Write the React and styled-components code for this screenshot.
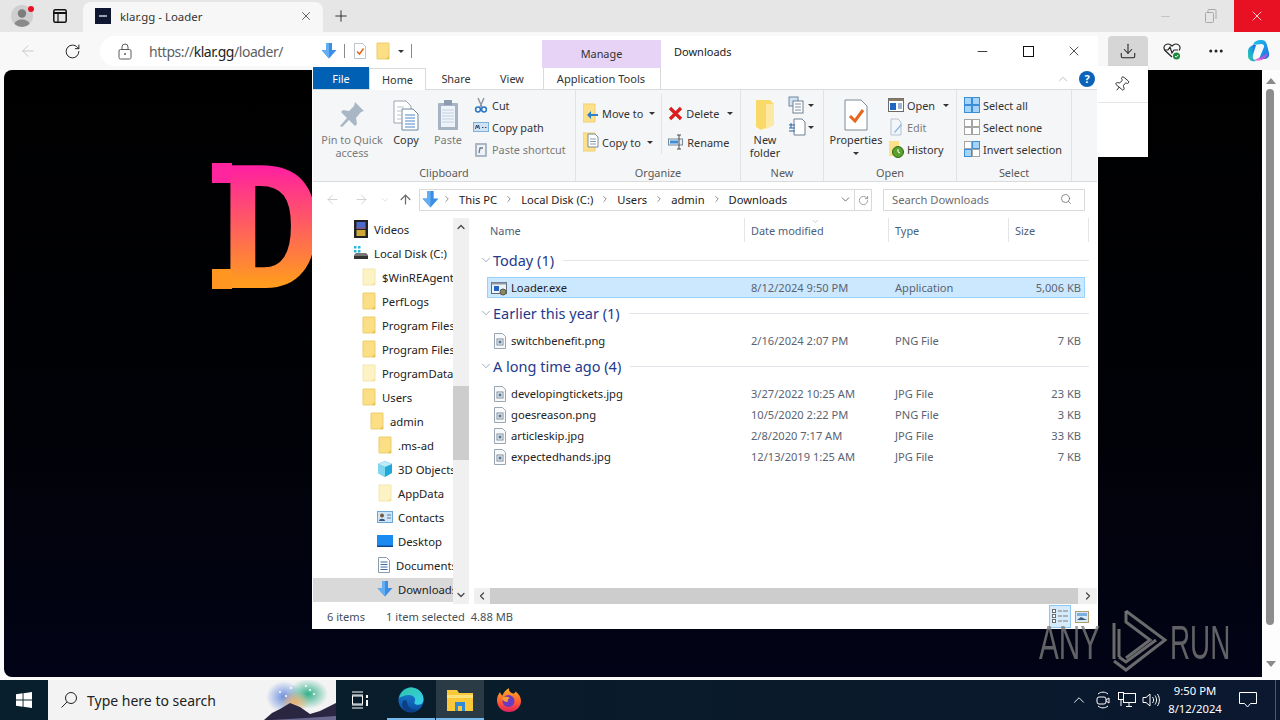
import React from 'react';
import styled, { createGlobalStyle } from 'styled-components';
import { ArrowLeft, RotateCw, Download, Ellipsis, Pin, X, Plus, Minus, Search, ChevronUp, ChevronDown, ChevronRight, ChevronLeft, ArrowUp, ArrowRight } from 'lucide-react';

const UI = '"Noto Sans", "Open Sans", sans-serif';

const Global = createGlobalStyle`
  html, body { margin: 0; padding: 0; width: 1280px; height: 720px; overflow: hidden; background: #fff; }
  * { box-sizing: border-box; }
  svg { display: block; flex: none; }
`;

const Screen = styled.div`position: relative; width: 1280px; height: 720px; display: flex; flex-direction: column; overflow: hidden; font-family: ${UI}; color: #333;`;
const Browser = styled.div`height: 680px; display: flex; flex-direction: column; background: #fbfbfb;`;
const TabStrip = styled.div`height: 32px; display: flex; align-items: stretch; background: #e6e6e6;`;
const StripBtn = styled.div`width: ${p => p.$w}px; display: flex; align-items: center; justify-content: center; position: relative; color: ${p => p.$c || '#222'}; background: ${p => p.$bg || 'transparent'};`;
const Spring = styled.div`flex: 1;`;
const Tab = styled.div`width: 240px; margin: 2px 0 0 7px; background: #f7f7f7; border-radius: 8px 8px 0 0; display: flex; align-items: center; padding: 0 10px 2px 12px;`;
const Favicon = styled.div`width: 16px; height: 16px; background: #0f1630; display: flex; align-items: center; justify-content: center; margin-right: 9px; &::after { content: ''; width: 8px; height: 2px; background: #98a0b0; }`;
const TabTitle = styled.div`flex: 1; font-size: 11.4px; color: #333;`;
const Dot = styled.span`position: absolute; width: 6px; height: 6px; border-radius: 50%; background: #e81123; top: 6px; left: 28px;`;

const Toolbar = styled.div`height: 38px; display: flex; align-items: flex-start; padding-top: 4px; background: #f8f8f8;`;
const NavBtn = styled.div`width: ${p => p.$w}px; height: 30px; display: flex; align-items: center; justify-content: center; color: ${p => p.$c || '#222'};`;
const UrlPill = styled.div`width: 500px; height: 30px; margin-left: 0; border-radius: 15px; background: #fff; display: flex; align-items: center; padding-left: 18px; font-size: 14px; color: #5f5f5f;`;
const UrlText = styled.span`margin-left: 17px; letter-spacing: -.45px; b { font-weight: 400; color: #222; }`;
const ActiveBtn = styled.div`width: 40px; height: 30px; background: #d6d6d6; border-radius: 4px 4px 0 0; display: flex; align-items: center; justify-content: center; color: #222; margin-left: 508px;`;

const Viewport = styled.div`flex: 1; display: flex; min-height: 0;`;
const PageCanvas = styled.div`flex: 1; margin: 0 0 3px 4px; border-radius: 8px 0 0 8px; overflow: hidden; background: linear-gradient(180deg, #000 0%, #010207 60%, #020316 100%); padding: 84px 0 0 215px;`;
const Hero = styled.div`
  position: relative; width: 120px; height: 170px;
  &::before, &::after { content: ''; position: absolute; left: -7px; width: 20px; height: 20px; }
  &::before { top: 9px; background: #ff259e; }
  &::after { top: 115px; background: #ff9621; }
`;
const HeroLetter = styled.div`font-family: "Liberation Mono", monospace; font-weight: 700; font-size: 186px; line-height: 170px; width: 120px; transform: scaleX(.93); transform-origin: left center; background: linear-gradient(180deg, #ff219f 8%, #ff9b1f 76%); -webkit-background-clip: text; background-clip: text; color: transparent;`;
const PageScroll = styled.div`width: 18px; display: flex; flex-direction: column; align-items: center; background: #fdfdfd; padding: 8px 0 12px; color: #8a8a8a;`;
const PageThumb = styled.div`width: 8px; height: 536px; margin: 5px 2px 36px 0; border-radius: 4px; background: #8c8c8c;`;
const Tri = styled.span`width: 0; height: 0; border-left: 5px solid transparent; border-right: 5px solid transparent; ${p => p.$down ? 'border-top: 6px solid #8a8a8a;' : 'border-bottom: 6px solid #8a8a8a;'}`;

const Flyout = styled.div`position: absolute; left: 1098px; top: 66px; width: 50px; height: 91px; background: #fff; box-shadow: 0 1px 2px rgba(0,0,0,.2);`;
const FlyoutHead = styled.div`height: 37px; border-bottom: 1px solid #e6e6e6; display: flex; align-items: center; justify-content: center; padding: 0 4px 0 0; color: #222;`;

const Win = styled.div`position: absolute; left: 312px; top: 36px; width: 786px; height: 593px; background: #fff; display: flex; flex-direction: column; padding: 0 1px; font-size: 10.9px; color: #333;`;
const TitleRow = styled.div`height: 32px; display: flex; align-items: flex-start;`;
const Quick = styled.div`width: 229px; height: 30px; display: flex; align-items: center; padding-left: 8px;`;
const ManageTab = styled.div`width: 119px; height: 28px; margin-top: 4px; background: #e6d3f5; display: flex; align-items: center; justify-content: center; color: #333; padding-bottom: 1px;`;
const WinTitle = styled.div`margin: 8px 0 0 13px; flex: 1; font-size: 11px; color: #222;`;
const WinBtn = styled.div`width: 46px; height: 30px; display: flex; align-items: center; justify-content: center; color: #111;`;
const MaxBox = styled.span`width: 11px; height: 11px; border: 1.5px solid #111;`;
const VSep = styled.span`width: 1px; height: 14px; background: #8a8a8a; margin: 0 ${p => p.$m || 0}px;`;
const Gap = styled.span`width: ${p => p.$w}px;`;

const TabRow = styled.div`height: 22px; display: flex; align-items: stretch; border-bottom: 1px solid #dadbdc;`;
const FileTab = styled.div`width: 56px; height: 22px; margin-top: -1px; background: #0060b4; color: #fff; display: flex; align-items: center; justify-content: center;`;
const RTab = styled.div`width: ${p => p.$w}px; height: ${p => p.$on ? 22 : 21}px; display: flex; align-items: center; justify-content: center; background: #fff; position: relative; z-index: 1; ${p => p.$on && 'border: 1px solid #dadbdc; border-bottom: none;'}`;
const ToolTab = styled(RTab)`border-left: 1px solid #dadbdc; border-right: 1px solid #dadbdc; margin-left: 5px; padding-right: 2px; font-size: 11.1px;`;
const RowEnd = styled.div`flex: 1; display: flex; justify-content: flex-end; align-items: center; gap: 9px; padding-right: 2px;`;
const Help = styled.span`width: 16px; height: 16px; border-radius: 50%; background: #0a63b8; color: #fff; font-weight: 700; font-size: 11px; display: flex; align-items: center; justify-content: center;`;

const Ribbon = styled.div`height: 92px; display: flex; background: #f5f6f7; border-bottom: 1px solid #dadbdc;`;
const Group = styled.div`width: ${p => p.$w}px; display: flex; flex-direction: column; border-right: 1px solid #e2e3e4;`;
const GroupBody = styled.div`height: 75px; display: flex; padding-left: ${p => p.$pl || 0}px;`;
const GroupLabel = styled.div`flex: 1; text-align: center; color: #5a5a5a; line-height: 16px;`;
const Large = styled.div`width: ${p => p.$w}px; padding-top: 9px; display: flex; flex-direction: column; align-items: center; text-align: center; line-height: 13px; color: ${p => p.$off ? '#7a7a7a' : '#333'};`;
const LargeLabel = styled.div`margin-top: 2px;`;
const Stack = styled.div`display: flex; flex-direction: column; margin-left: ${p => p.$ml || 0}px; padding-top: ${p => p.$pt ?? 4}px; gap: ${p => p.$gap || 0}px;`;
const Small = styled.div`height: 22px; display: flex; align-items: center; gap: 3px; white-space: nowrap; color: ${p => p.$off ? '#7a7a7a' : '#333'};`;
const MiniTri = styled.span`width: 0; height: 0; margin: ${p => p.$m || '0 0 0 3px'}; border-left: 3px solid transparent; border-right: 3px solid transparent; border-top: 3px solid #333;`;
const InnerSep = styled.div`width: 1px; height: 60px; background: #e2e3e4; margin: 4px 6px 0 6px;`;

const AddressRow = styled.div`height: 36px; padding-top: 7px; display: flex; align-items: flex-start; font-size: 11.2px;`;
const ANav = styled.div`width: ${p => p.$w}px; height: 21px; display: flex; align-items: center; justify-content: center; color: ${p => p.$c || '#cfcfcf'};`;
const AddressBox = styled.div`width: 436px; height: 22px; margin-left: 4px; border: 1px solid #d9d9d9; display: flex; align-items: center; padding: 0 0 2px 2px; color: #1b1b1b;`;
const Crumb = styled.span`margin: 0 7px; white-space: nowrap;`;
const Refresh = styled.div`width: 17px; height: 22px; border: 1px solid #d9d9d9; border-left: none; display: flex; align-items: center; justify-content: center; color: #777;`;
const SearchBox = styled.div`width: 202px; height: 22px; margin-left: 11px; border: 1px solid #d9d9d9; display: flex; align-items: center; justify-content: space-between; padding: 0 12px 2px 8px; color: #6d6d6d;`;

const Body = styled.div`flex: 1; display: flex; min-height: 0;`;
const Tree = styled.div`width: 140px; overflow: hidden; background: #fff; font-size: 11.3px;`;
const TreeRow = styled.div`height: 24px; display: flex; align-items: center; gap: 5px; padding: 0 0 2px ${p => p.$i}px; white-space: nowrap; color: #222; background: ${p => p.$on ? '#d9d9d9' : 'transparent'};`;
const VBar = styled.div`width: 16px; background: #f0f0f0; display: flex; flex-direction: column; align-items: center; color: #444;`;
const VArrow = styled.div`height: 18px; display: flex; align-items: center; justify-content: center;`;
const VThumb = styled.div`width: 16px; height: 74px; background: #cdcdcd; margin-top: 150px; margin-bottom: auto;`;

const ListPane = styled.div`flex: 1; display: flex; flex-direction: column; min-width: 0; margin-left: 1px;`;
const ColHead = styled.div`height: 24px; display: flex; color: #4c607a;`;
const ColCell = styled.div`width: ${p => p.$w}px; padding-left: ${p => p.$pl || 6}px; display: flex; align-items: center; border-right: 1px solid #e5e5e5; position: relative;`;
const SortCaret = styled.span`position: absolute; left: 66px; top: -1px; color: #9a9a9a;`;
const Items = styled.div`flex: 1; padding: 3px 12px 0 0;`;
const GroupHead = styled.div`height: 32px; display: flex; align-items: center; padding: 0 0 2px 9px; font-size: 14.5px; color: #243a8c; margin-right: -4px;`;
const GroupChevron = styled.span`width: 14px; color: #7a8ba0;`;
const GroupName = styled.span`white-space: nowrap;`;
const GroupLine = styled.span`flex: 1; height: 1px; background: #e2e5ea; margin-left: 9px;`;
const ItemRow = styled.div`height: 21px; margin-left: 17px; padding: 0 3px 0 5px; display: grid; grid-template-columns: 258px 144px 1fr auto; align-items: center; font-size: 11.1px; color: #5a6472; border: 1px solid ${p => p.$on ? '#99d1ff' : 'transparent'}; background: ${p => p.$on ? '#cce8ff' : 'transparent'};`;
const ItemName = styled.div`display: flex; align-items: center; gap: 4px; color: #222; font-size: 11.2px;`;
const ItemIcon = styled.span`width: 14px; display: flex; justify-content: flex-end;`;
const HBar = styled.div`height: 16px; margin-left: 4px; display: flex; background: #f0f0f0; color: #444;`;
const HArrow = styled.div`width: ${p => p.$w}px; display: flex; align-items: center; justify-content: center;`;
const HThumb = styled.div`flex: 1; background: #cdcdcd;`;
const Status = styled.div`height: 25px; display: flex; align-items: center; padding-left: 14px; color: #444f5c; font-size: 11.1px;`;
const StatusText = styled.span`margin-right: ${p => p.$mr || 0}px;`;
const ViewBtn = styled.div`width: ${p => p.$w}px; height: 23px; display: flex; align-items: center; justify-content: center; ${p => p.$on && 'background: #d5ebfb; border: 1px solid #8cc8f0;'}`;
const ViewBtns = styled.div`margin-left: auto; display: flex; margin-right: 8px; gap: 3px;`;

const Taskbar = styled.div`height: 40px; display: flex; align-items: stretch; background: linear-gradient(90deg, #07202c, #0a1a2a 60%, #0b1830); color: #fff;`;
const TaskBtn = styled.div`width: ${p => p.$w || 48}px; margin-left: ${p => p.$ml || 0}px; display: flex; align-items: center; justify-content: center; position: relative; background: ${p => p.$on ? '#2a3b45' : 'transparent'}; ${p => p.$bar && 'border-bottom: 2px solid #76b9ed; padding-top: 2px;'}`;
const SearchBar = styled.div`width: 288px; background: #f3f3f3; display: flex; align-items: center; padding-left: 12px; color: #222; font-size: 14px; overflow: hidden; position: relative;`;
const SearchLabel = styled.span`margin-left: 9px; white-space: nowrap;`;
const SearchArt = styled.div`margin-left: auto; align-self: flex-end;`;
const Tray = styled.div`width: 24px; display: flex; align-items: center; justify-content: center;`;
const Clock = styled.div`width: 64px; margin-right: 2px; text-align: center; font-size: 11.3px; line-height: 18px; padding-top: 2px; white-space: nowrap;`;
const Peek = styled.div`width: 5px; border-left: 1px solid #4b5b66; margin-left: 9px;`;

const Mark = styled.div`position: absolute; left: 1039px; top: 609px; display: flex; align-items: center; height: 63px; color: rgba(125,125,125,.78); pointer-events: none;`;
const MarkWord = styled.span`font-family: "Liberation Sans", sans-serif; font-size: 48px; line-height: 48px; width: ${p => p.$w}px; display: block; transform: scaleX(${p => p.$sx}); transform-origin: left center; white-space: nowrap; margin-top: 4px;`;

/* ---- drawn icons ---- */
const Folder = ({ pale }) => (
  <svg width="16" height="18" viewBox="0 0 16 18"><path d="M2 1h12v16H2z" fill={pale ? '#fdf2c4' : '#fcdf85'} stroke={pale ? '#f3e6b0' : '#eccd6e'} /><path d="M11 17l3-3v3z" fill={pale ? '#f3e2a0' : '#e8bf45'} /></svg>
);
const FileDoc = () => (
  <svg width="14" height="16" viewBox="0 0 14 16"><path d="M1.5.5h8l3 3v12h-11z" fill="#f7f9fb" stroke="#9aa6b2" /><rect x="4" y="6" width="6" height="6" fill="#fff" stroke="#7b8b9a" /><rect x="5.5" y="7.5" width="3" height="3" fill="#5a7a9a" /></svg>
);
const ExeIcon = () => (
  <svg width="16" height="16" viewBox="0 0 16 16"><rect x=".5" y="2.5" width="15" height="11" fill="#eef2f6" stroke="#5d6a76" /><rect x=".5" y="2.5" width="15" height="2" fill="#8d99a6" /><rect x="3" y="6" width="5" height="5" fill="#1f66c4" /><circle cx="12" cy="12" r="3" fill="#8b8a5a" stroke="#555" /></svg>
);
const Videos = () => (<svg width="16" height="18" viewBox="0 0 16 18"><rect x="1" y="0" width="14" height="18" fill="#222" /><rect x="3.5" y="2" width="9" height="6" fill="#4a6ad0" /><rect x="3.5" y="10" width="9" height="6" fill="#d0a83a" /><rect x="3.5" y="7" width="9" height="2" fill="#7a5a90" /></svg>);
const Disk = () => (<svg width="16" height="16" viewBox="0 0 16 16"><rect x="1" y="1" width="2.5" height="2.5" fill="#28b8e0" /><rect x="5" y="1" width="2.5" height="2.5" fill="#28b8e0" /><rect x="1" y="5" width="2.5" height="2.5" fill="#28b8e0" /><rect x="5" y="5" width="2.5" height="2.5" fill="#28b8e0" /><path d="M1 10l2-2h10l2 2v4H1z" fill="#777" /><rect x="1" y="11" width="14" height="3" fill="#333" /></svg>);
const Cube = () => (<svg width="16" height="16" viewBox="0 0 16 16"><path d="M8 0l7 3v9l-7 4-7-4V3z" fill="#1fa8d8" /><path d="M8 0l7 3-7 3-7-3z" fill="#bdeaf8" /><path d="M1 3l7 3v10l-7-4z" fill="#7fd6ee" /></svg>);
const Contacts = () => (<svg width="16" height="14" viewBox="0 0 16 14"><rect x=".5" y="1.5" width="15" height="11" fill="#cfe6f8" stroke="#6aa6d8" /><circle cx="5" cy="5.5" r="2" fill="#7a5a3a" /><path d="M2 11c0-3 6-3 6 0z" fill="#3a5a7a" /><path d="M10 5h4M10 8h4" stroke="#5a7a9a" /></svg>);
const DesktopIco = () => (<svg width="16" height="14" viewBox="0 0 16 14"><rect x="0" y="1" width="16" height="12" fill="#1a8cf0" /><rect x="0" y="11.5" width="16" height="1.5" fill="#0a4a90" /></svg>);
const DocsIco = () => (<svg width="14" height="16" viewBox="0 0 14 16"><path d="M1.5.5h8l3 3v12h-11z" fill="#fff" stroke="#8a9aaa" /><path d="M3.5 5h7M3.5 7.5h7M3.5 10h7M3.5 12.5h7" stroke="#3a6aa0" /></svg>);
const DownArrow = ({ s = 16 }) => (<svg width={s} height={s} viewBox="0 0 16 16"><path d="M5 0h6v7h4.5L8 15.5.5 7H5z" fill="#3a8ee6" /><path d="M5 0h3v15.5L.5 7H5z" fill="#63aef0" /></svg>);

const PinIco = () => (<svg width="32" height="32" viewBox="0 0 32 32"><path d="M19 3l9 9-3 1-5 6 1 6-2 2-6-6-7 7-2-1 7-8-6-6 2-2 6 1 5-5z" fill="#a9b6c6" /></svg>);
const CopyIco = () => (<svg width="32" height="32" viewBox="0 0 32 32"><path d="M4 2h12l5 5v17H4z" fill="#fff" stroke="#9aa6b2" /><path d="M12 10h11l5 5v16H12z" fill="#fff" stroke="#6f87a0" /><path d="M15 16h10M15 19h10M15 22h10M15 25h10M15 28h10" stroke="#4f86c6" /><path d="M7 8h7M7 12h4M7 16h4M7 20h4" stroke="#b9c2cc" /></svg>);
const PasteIco = () => (<svg width="32" height="32" viewBox="0 0 32 32"><rect x="6" y="4" width="20" height="27" rx="1" fill="#a5b3c4" /><rect x="9" y="7" width="14" height="21" fill="#eef3fa" /><path d="M10 11h12M10 14h12M10 17h12M10 20h12M10 23h12" stroke="#c5d2e2" /><rect x="12" y="1" width="8" height="5" fill="#8d9cb0" /></svg>);
const CutIco = () => (<svg width="16" height="16" viewBox="0 0 16 16"><path d="M5 1l4 9M11 1L7 10" stroke="#8a939e" strokeWidth="1.4" /><circle cx="5" cy="12.5" r="2.4" fill="none" stroke="#2a75c4" strokeWidth="1.5" /><circle cx="11" cy="12.5" r="2.4" fill="none" stroke="#2a75c4" strokeWidth="1.5" /></svg>);
const CopyPathIco = () => (<svg width="16" height="16" viewBox="0 0 16 16"><rect x=".5" y="3.5" width="15" height="9" fill="#cfe3f5" stroke="#7fb0da" /><path d="M2.5 10l1-4 1 3 1-3 1 4M9 8.5h1.5M12 8.5h1.5" stroke="#2a4a6a" fill="none" /></svg>);
const ShortcutIco = () => (<svg width="16" height="16" viewBox="0 0 16 16"><rect x="2" y="2" width="12" height="14" rx="1" fill="#aab6c4" /><rect x="4" y="4" width="8" height="10" fill="#eef2f7" /><path d="M6 12l1-5h3" stroke="#6a7a8a" fill="none" strokeWidth="1.3" /></svg>);
const MoveIco = () => (<svg width="16" height="20" viewBox="0 0 16 20"><path d="M0 1h12v18H0z" fill="#fde08a" stroke="#f1cf70" /><path d="M15 11H8V8l-4 4 4 4v-3h7z" fill="#2f7fd0" /></svg>);
const CopyToIco = () => (<svg width="16" height="20" viewBox="0 0 16 20"><path d="M0 1h12v18H0z" fill="#fde08a" stroke="#f1cf70" /><path d="M5 2h7l3 3v10H5z" fill="#fff" stroke="#7a8a9a" /><path d="M7 7h6M7 9.500h6M7 12h6" stroke="#8a9aaa" /></svg>);
const DeleteIco = () => (<svg width="15" height="15" viewBox="0 0 15 15"><path d="M2 2l11 11M13 2L2 13" stroke="#d81e1e" strokeWidth="3.2" /></svg>);
const RenameIco = () => (<svg width="16" height="16" viewBox="0 0 16 16"><rect x=".5" y="5" width="14" height="6" fill="#e6eef6" stroke="#7a8a9a" /><rect x="2" y="6.5" width="8" height="3" fill="#3d8edb" /><path d="M11 1v14M9 1h4M9 15h4" stroke="#4a4a4a" /></svg>);
const NewFolderIco = () => (<svg width="32" height="32" viewBox="0 0 32 32"><path d="M7 1h14l4 4v21l-13 5-5-3z" fill="#fbd968" /><path d="M17 5l8 0v21l-8 4z" fill="#fce9a4" /></svg>);
const NewItemIco = () => (<svg width="20" height="18" viewBox="0 0 20 18"><rect x="1" y="1" width="9" height="9" fill="#cfe3f5" stroke="#6f87a0" /><rect x="5" y="5" width="10" height="12" fill="#fff" stroke="#6f7f8f" /><path d="M7 8h6M7 11h6M7 14h6" stroke="#7a8a9a" /></svg>);
const EasyIco = () => (<svg width="20" height="18" viewBox="0 0 20 18"><path d="M6 1h8l3 3v13H6z" fill="#fff" stroke="#6f7f8f" /><path d="M1 7h6M1 10h6M1 13h6M3 5v5" stroke="#2a64a8" /></svg>);
const PropsIco = ({ s = 32 }) => (<svg width={s} height={s} viewBox="0 0 32 32"><path d="M5 1h16l6 6v24H5z" fill="#fff" stroke="#7a8a9a" /><path d="M10 17l5 5 8-11" stroke="#e8651c" strokeWidth="3" fill="none" /></svg>);
const OpenIco = () => (<svg width="16" height="14" viewBox="0 0 16 14"><rect x=".5" y=".5" width="15" height="13" fill="#fff" stroke="#6a6a6a" /><rect x=".5" y=".5" width="15" height="2.5" fill="#8a7a6a" /><rect x="2" y="5" width="6" height="7" fill="#1f66c4" /><path d="M10 6h4M10 8h4M10 10h4" stroke="#3a6aa0" /></svg>);
const EditIco = () => (<svg width="16" height="18" viewBox="0 0 16 18"><path d="M3 1h7l3 3v13H3z" fill="#f2f6fb" stroke="#b5c2d0" /><path d="M6 14l7-8 1 1-7 8z" fill="#8fb7df" /></svg>);
const HistoryIco = () => (<svg width="16" height="18" viewBox="0 0 16 18"><rect x="1" y="1" width="10" height="15" fill="#fde08a" /><circle cx="10" cy="12" r="5.5" fill="#5aa02c" stroke="#2f6a18" /><path d="M10 9v3l2 1" stroke="#fff" fill="none" /></svg>);
const SelIco = ({ a, b, c, d }) => {
  const cell = on => on ? { fill: '#a6d4f6', stroke: '#3a8fd8' } : { fill: '#fff', stroke: '#a5a5a5' };
  return (<svg width="16" height="16" viewBox="0 0 16 16"><rect x=".5" y=".5" width="7" height="7" {...cell(a)} /><rect x="8.5" y=".5" width="7" height="7" {...cell(b)} /><rect x=".5" y="8.5" width="7" height="7" {...cell(c)} /><rect x="8.5" y="8.5" width="7" height="7" {...cell(d)} /></svg>);
};
const Avatar = () => (<svg width="22" height="22" viewBox="0 0 22 22"><circle cx="11" cy="11" r="11" fill="#cfcfcf" /><circle cx="11" cy="8.5" r="4.2" fill="#7d7d7d" /><path d="M3.5 19c1-6 14-6 15 0a11 11 0 0 1-15 0z" fill="#8a8a8a" /></svg>);
const Panes = () => (<svg width="14" height="14" viewBox="0 0 14 14"><rect x=".8" y=".8" width="12.4" height="12.4" rx="1.5" fill="none" stroke="#111" strokeWidth="1.5" /><path d="M.8 4h12.4" stroke="#111" strokeWidth="2" /><path d="M5 4v9" stroke="#111" strokeWidth="1.2" /></svg>);
const Restore = () => (<svg width="12" height="14" viewBox="0 0 12 14"><rect x=".5" y="3.5" width="8" height="10" rx="1" fill="none" stroke="#a8a8a8" /><path d="M3 3V1.5a1 1 0 0 1 1-1h6a1 1 0 0 1 1 1V10" fill="none" stroke="#a8a8a8" /></svg>);
const LockIco = () => (<svg width="14" height="17" viewBox="0 0 14 17"><rect x="1" y="6.5" width="12" height="9.5" rx="1.5" fill="none" stroke="#5a5a5a" /><path d="M4 6.5V4a3 3 0 0 1 6 0v2.5" fill="none" stroke="#5a5a5a" /><circle cx="7" cy="11" r="1" fill="#5a5a5a" /></svg>);
const HealthIco = () => (<svg width="20" height="20" viewBox="0 0 20 20"><path d="M10 16L3 9.5C-.5 5 5.5.5 10 5c4.500-4.500 10.500 0 7 4.500" fill="none" stroke="#222" strokeWidth="1.2" /><path d="M2 9h4l2-3 2 6 2-3h4" fill="none" stroke="#222" strokeWidth="1.2" /><circle cx="14.500" cy="15" r="3.500" fill="#1c8a3c" /><path d="M13 15l1.200 1.200 2-2.200" stroke="#fff" fill="none" /></svg>);
const Copilot = () => (<svg width="24" height="24" viewBox="0 0 24 24"><defs><linearGradient id="cpa" x1="0" y1="0" x2="1" y2="1"><stop offset="0" stopColor="#1dc8f0" /><stop offset="1" stopColor="#1a6ee0" /></linearGradient><linearGradient id="cpb" x1="0" y1="1" x2="1" y2="0"><stop offset="0" stopColor="#2fd2a0" /><stop offset=".6" stopColor="#1a9ee0" /><stop offset="1" stopColor="#2060e0" /></linearGradient></defs><path d="M7 6c1-4 5-5 8-5 3 0 5 1 6 5l2 8c1 4-2 6-5 6h-5l5-12c.5-2-1-3-3-3z" fill="url(#cpa)" /><path d="M2 12c0-3 3-5 5-6l3 0-3 10c-1 3 1 5 3 6-4 1-8-1-8-5z" fill="url(#cpb)" /><path d="M8 21c3 1 7 1 10-1 2-1 3-3 4-6l-5 3z" fill="#d94fd0" opacity=".75" /></svg>);
const DetailsIco = () => (<svg width="17" height="15" viewBox="0 0 17 15"><g fill="#fff" stroke="#6a6a6a"><rect x=".5" y=".5" width="3" height="3" /><rect x=".5" y="5.500" width="3" height="3" /><rect x=".5" y="10.500" width="3" height="3" /></g><path d="M6 2h4M11 2h5M6 7h4M11 7h5M6 12h4M11 12h5" stroke="#7a7a7a" /></svg>);
const ThumbIco = () => (<svg width="14" height="12" viewBox="0 0 14 12"><rect x=".5" y=".5" width="13" height="11" fill="#d9e8f5" stroke="#b09a70" /><path d="M2 9l4-3 6 3z" fill="#3a5a7a" /><rect x="2" y="2" width="10" height="3" fill="#7ab0e0" /></svg>);
const WinLogo = () => (<svg width="16" height="16" viewBox="0 0 16 16"><path d="M0 2.300L6.600 1.300v6.200H0zM7.500 1.200L16 0v7.500H7.500zM0 8.500h6.600v6.200L0 13.700zM7.500 8.500H16V16l-8.500-1.200z" fill="#fff" /></svg>);
const Magnifier = () => (<svg width="18" height="18" viewBox="0 0 18 18"><circle cx="11" cy="7" r="5.500" fill="none" stroke="#222" /><path d="M7 11l-5.500 5.500" stroke="#222" /></svg>);
const SearchPic = () => (<svg width="72" height="40" viewBox="0 0 72 40"><defs><radialGradient id="sk1"><stop offset="0" stopColor="#6a8fe0" /><stop offset="1" stopColor="#6a8fe0" stopOpacity="0" /></radialGradient><radialGradient id="sk2"><stop offset="0" stopColor="#34b08a" /><stop offset="1" stopColor="#34b08a" stopOpacity="0" /></radialGradient><radialGradient id="sk3"><stop offset="0" stopColor="#e8b070" /><stop offset="1" stopColor="#e8b070" stopOpacity="0" /></radialGradient></defs><ellipse cx="20" cy="17" rx="18" ry="16" fill="url(#sk1)" /><ellipse cx="44" cy="14" rx="20" ry="15" fill="url(#sk2)" /><ellipse cx="31" cy="22" rx="15" ry="11" fill="url(#sk3)" /><path d="M0 40l8-7 8-4 10-6 10 4 10 7 10-3 16-8v17z" fill="#2a2540" /><path d="M6 40h66v-4l-30 2z" fill="#6a6a90" /><g fill="#fff"><circle cx="16" cy="12" r="1" /><circle cx="27" cy="8" r="1" /><circle cx="42" cy="6" r="1" /><circle cx="50" cy="14" r="1" /><circle cx="22" cy="16" r="1" /><circle cx="46" cy="10" r="1" /></g></svg>);
const TaskView = () => (<svg width="18" height="18" viewBox="0 0 18 18"><path d="M1 1h11M1 17h11M1 14h11M1 4h11" stroke="#fff" /><rect x="1.500" y="5" width="10" height="8" fill="none" stroke="#fff" /><rect x="15" y="4" width="2" height="3" fill="#fff" /><rect x="15" y="9" width="2" height="6" fill="#fff" /></svg>);
const Edge = () => (<svg width="26" height="26" viewBox="0 0 26 26"><defs><linearGradient id="eg1" x1="0" y1="0" x2="1" y2="1"><stop offset="0" stopColor="#2fc6a0" /><stop offset="1" stopColor="#36d0f0" /></linearGradient><linearGradient id="eg2" x1="0" y1="0" x2="0" y2="1"><stop offset="0" stopColor="#1a8ad8" /><stop offset="1" stopColor="#0a4aa0" /></linearGradient></defs><circle cx="13" cy="13" r="12.500" fill="url(#eg2)" /><path d="M1 11C3 3 10 .5 13 .5c7 0 12.500 5 12.500 12 0 5-5 6-7.500 5-2-1-2-2-1-3.500 1-3-2-6-6-6-5 0-8 2-10 3z" fill="url(#eg1)" /><path d="M9 15c0 5 5 8 10 8-3 2-6 2.500-9 1.500C5 23 3 18 5 14c1-1 4-1 4 1z" fill="#0c3f86" /></svg>);
const ExplorerIco = () => (<svg width="26" height="24" viewBox="0 0 26 24"><path d="M0 2h10l2 3h14v18H0z" fill="#fbc83a" /><path d="M0 7h26v3H0z" fill="#ffe27a" /><rect x="8" y="14" width="10" height="9" fill="#2f8ad8" /><rect x="11" y="18" width="4" height="5" fill="#fbc83a" /></svg>);
const Firefox = () => (<svg width="26" height="26" viewBox="0 0 26 26"><defs><linearGradient id="ff" x1="0" y1="0" x2="0" y2="1"><stop offset="0" stopColor="#ffb020" /><stop offset=".6" stopColor="#ff5a30" /><stop offset="1" stopColor="#e02060" /></linearGradient></defs><path d="M13 25C5 25 1 19 1 13.500 1 9 3 7 4 5c.5 2 1.500 3 2.500 3.500C7.500 5 10 3 13 1c-.5 3 1 4.500 4 5.500 1 .3 2-.5 2.500-2C23 7 25 10 25 14c0 6-5 11-12 11z" fill="url(#ff)" /><circle cx="12.500" cy="14" r="6" fill="#6a3ac0" /><path d="M6 11c3-2 6-1 8 0-2 1-3 2-2 4-3 0-5-1-6-4z" fill="#ff9a30" /></svg>);
const MeetIco = () => (<svg width="16" height="18" viewBox="0 0 16 18"><path d="M3 3c3-2.500 7-2.500 10 0M3 15c3 2.500 7 2.500 10 0" fill="none" stroke="#fff" /><rect x="2" y="6" width="9" height="7" rx="2" fill="none" stroke="#fff" /><path d="M11 9l3-2v5l-3-2" fill="none" stroke="#fff" /></svg>);
const NetIco = () => (<svg width="18" height="16" viewBox="0 0 18 16"><rect x="5.500" y="1.500" width="12" height="9" fill="none" stroke="#fff" /><rect x=".5" y=".5" width="5" height="7" fill="#0a1a2a" stroke="#fff" /><path d="M11 11v3M8 14.500h6M3 8v6" stroke="#fff" /></svg>);
const VolIco = () => (<svg width="18" height="16" viewBox="0 0 18 16"><path d="M1 5.500h3L8 2v12L4 10.500H1z" fill="none" stroke="#fff" /><path d="M10.500 5c1.500 2 1.500 4 0 6M13 3.500c2 3 2 6 0 9M15.500 2c2.500 4 2.500 8 0 12" fill="none" stroke="#fff" /></svg>);
const NotifIco = () => (<svg width="18" height="16" viewBox="0 0 18 16"><path d="M.5.500h17v11h-6l-3 3.500-3-3.500h-5z" fill="none" stroke="#fff" /></svg>);
const MarkLogo = () => (<svg width="58" height="63" viewBox="0 0 58 63" fill="none" stroke="rgba(125,125,125,.85)" strokeWidth="3" style={{ margin: '0 2px 0 10px' }}><path d="M4 14v36M9 20v28" /><path d="M16 2l39 29-39 30-12-9" /><path d="M16 2v11l24 18-24 18" /><path d="M9 48l7 5 30-22" /></svg>);

const tree = [
  { t: 'Videos', i: 40, ic: <Videos /> },
  { t: 'Local Disk (C:)', i: 40, ic: <Disk /> },
  { t: '$WinREAgent', i: 48, ic: <Folder pale /> },
  { t: 'PerfLogs', i: 48, ic: <Folder /> },
  { t: 'Program Files', i: 48, ic: <Folder /> },
  { t: 'Program Files', i: 48, ic: <Folder /> },
  { t: 'ProgramData', i: 48, ic: <Folder pale /> },
  { t: 'Users', i: 48, ic: <Folder /> },
  { t: 'admin', i: 56, ic: <Folder /> },
  { t: '.ms-ad', i: 64, ic: <Folder /> },
  { t: '3D Objects', i: 64, ic: <Cube /> },
  { t: 'AppData', i: 64, ic: <Folder pale /> },
  { t: 'Contacts', i: 64, ic: <Contacts /> },
  { t: 'Desktop', i: 64, ic: <DesktopIco /> },
  { t: 'Documents', i: 64, ic: <DocsIco /> },
  { t: 'Downloads', i: 64, ic: <DownArrow />, on: true },
];

const groups = [
  { name: 'Today (1)', items: [{ n: 'Loader.exe', d: '8/12/2024 9:50 PM', k: 'Application', s: '5,006 KB', on: true }] },
  { name: 'Earlier this year (1)', items: [{ n: 'switchbenefit.png', d: '2/16/2024 2:07 PM', k: 'PNG File', s: '7 KB' }] },
  { name: 'A long time ago (4)', items: [
    { n: 'developingtickets.jpg', d: '3/27/2022 10:25 AM', k: 'JPG File', s: '23 KB' },
    { n: 'goesreason.png', d: '10/5/2020 2:22 PM', k: 'PNG File', s: '3 KB' },
    { n: 'articleskip.jpg', d: '2/8/2020 7:17 AM', k: 'JPG File', s: '33 KB' },
    { n: 'expectedhands.jpg', d: '12/13/2019 1:25 AM', k: 'JPG File', s: '7 KB' },
  ] },
];

const Crumbs = ['This PC', 'Local Disk (C:)', 'Users', 'admin', 'Downloads'];

export default function App() {
  return (
    <Screen>
      <Global />
      <Browser>
        <TabStrip>
          <StripBtn $w={44}><Avatar /><Dot /></StripBtn>
          <StripBtn $w={32}><Panes /></StripBtn>
          <Tab>
            <Favicon />
            <TabTitle>klar.gg - Loader</TabTitle>
            <X size={14} strokeWidth={1.3} color="#333" />
          </Tab>
          <StripBtn $w={36}><Plus size={18} strokeWidth={1.2} /></StripBtn>
          <Spring />
          <StripBtn $w={46} $c="#a8a8a8"><Minus size={13} strokeWidth={1} /></StripBtn>
          <StripBtn $w={46}><Restore /></StripBtn>
          <StripBtn $w={46} $bg="#e81123" $c="#fff"><X size={16} strokeWidth={1.2} /></StripBtn>
        </TabStrip>
        <Toolbar>
          <NavBtn $w={56} $c="#c9c9c9"><ArrowLeft size={18} strokeWidth={1.3} /></NavBtn>
          <NavBtn $w={32}><RotateCw size={17} strokeWidth={1.4} /></NavBtn>
          <NavBtn $w={12} />
          <UrlPill>
            <LockIco />
            <UrlText>https://<b>klar.gg</b>/loader/</UrlText>
          </UrlPill>
          <ActiveBtn><Download size={18} strokeWidth={1.4} /></ActiveBtn>
          <NavBtn $w={48}><HealthIco /></NavBtn>
          <NavBtn $w={40}><Ellipsis size={18} strokeWidth={2} /></NavBtn>
          <NavBtn $w={44}><Copilot /></NavBtn>
        </Toolbar>
        <Viewport>
          <PageCanvas><Hero><HeroLetter>D</HeroLetter></Hero></PageCanvas>
          <PageScroll>
            <Tri />
            <PageThumb />
            <Tri $down />
          </PageScroll>
        </Viewport>
      </Browser>
      <Taskbar>
        <TaskBtn><WinLogo /></TaskBtn>
        <SearchBar>
          <Magnifier />
          <SearchLabel>Type here to search</SearchLabel>
          <SearchArt><SearchPic /></SearchArt>
        </SearchBar>
        <TaskBtn><TaskView /></TaskBtn>
        <TaskBtn $ml={3} $bar><Edge /></TaskBtn>
        <TaskBtn $ml={1} $on $bar><ExplorerIco /></TaskBtn>
        <TaskBtn $ml={1}><Firefox /></TaskBtn>
        <Spring />
        <Tray><ChevronUp size={18} strokeWidth={1.2} /></Tray>
        <Tray><MeetIco /></Tray>
        <Tray><NetIco /></Tray>
        <Tray><VolIco /></Tray>
        <Clock>9:50 PM<br />8/12/2024</Clock>
        <TaskBtn $w={37}><NotifIco /></TaskBtn>
        <Peek />
      </Taskbar>

      <Flyout><FlyoutHead><Pin size={17} strokeWidth={1.2} style={{ transform: 'rotate(40deg)' }} /></FlyoutHead></Flyout>

      <Win>
        <TitleRow>
          <Quick>
            <DownArrow s={16} />
            <VSep $m={7} />
            <PropsIco s={16} />
            <Gap $w={7} />
            <Folder />
            <MiniTri $m="0 0 0 7px" />
            <VSep $m={7} />
          </Quick>
          <ManageTab>Manage</ManageTab>
          <WinTitle>Downloads</WinTitle>
          <WinBtn><Minus size={15} strokeWidth={1.3} /></WinBtn>
          <WinBtn><MaxBox /></WinBtn>
          <WinBtn><X size={16} strokeWidth={1.1} /></WinBtn>
        </TitleRow>
        <TabRow>
          <FileTab>File</FileTab>
          <RTab $w={57} $on>Home</RTab>
          <RTab $w={60}>Share</RTab>
          <RTab $w={52}>View</RTab>
          <ToolTab $w={118}>Application Tools</ToolTab>
          <RowEnd><ChevronUp size={14} strokeWidth={1.3} color="#aaa" /><Help>?</Help></RowEnd>
        </TabRow>
        <Ribbon>
          <Group $w={263}>
            <GroupBody $pl={6}>
              <Large $w={66} $off><PinIco /><LargeLabel>Pin to Quick access</LargeLabel></Large>
              <Large $w={42}><CopyIco /><LargeLabel>Copy</LargeLabel></Large>
              <Large $w={42} $off><PasteIco /><LargeLabel>Paste</LargeLabel></Large>
              <Stack $ml={4}>
                <Small><CutIco />Cut</Small>
                <Small><CopyPathIco />Copy path</Small>
                <Small $off><ShortcutIco />Paste shortcut</Small>
              </Stack>
            </GroupBody>
            <GroupLabel>Clipboard</GroupLabel>
          </Group>
          <Group $w={165}>
            <GroupBody $pl={7}>
              <Stack $pt={12} $gap={7}>
                <Small><MoveIco />Move to<MiniTri /></Small>
                <Small><CopyToIco />Copy to<MiniTri /></Small>
              </Stack>
              <InnerSep />
              <Stack $pt={12} $gap={7}>
                <Small><DeleteIco />Delete<MiniTri $m="0 0 0 5px" /></Small>
                <Small><RenameIco />Rename</Small>
              </Stack>
            </GroupBody>
            <GroupLabel>Organize</GroupLabel>
          </Group>
          <Group $w={83}>
            <GroupBody $pl={3}>
              <Large $w={42}><NewFolderIco /><LargeLabel>New folder</LargeLabel></Large>
              <Stack $ml={2}>
                <Small><NewItemIco /><MiniTri $m="0 0 0 -3px" /></Small>
                <Small><EasyIco /><MiniTri $m="0 0 0 -3px" /></Small>
              </Stack>
            </GroupBody>
            <GroupLabel>New</GroupLabel>
          </Group>
          <Group $w={133}>
            <GroupBody $pl={2}>
              <Large $w={60}><PropsIco /><LargeLabel>Properties</LargeLabel><MiniTri $m="6px 0 0 0" /></Large>
              <Stack $ml={2}>
                <Small><OpenIco />Open<MiniTri $m="0 0 0 5px" /></Small>
                <Small $off><EditIco />Edit</Small>
                <Small><HistoryIco />History</Small>
              </Stack>
            </GroupBody>
            <GroupLabel>Open</GroupLabel>
          </Group>
          <Group $w={115}>
            <GroupBody $pl={7}>
              <Stack>
                <Small><SelIco a b c d />Select all</Small>
                <Small><SelIco />Select none</Small>
                <Small><SelIco b c />Invert selection</Small>
              </Stack>
            </GroupBody>
            <GroupLabel>Select</GroupLabel>
          </Group>
        </Ribbon>
        <AddressRow>
          <ANav $w={30} style={{ marginLeft: 4 }}><ArrowLeft size={15} strokeWidth={1.5} /></ANav>
          <ANav $w={28}><ArrowRight size={15} strokeWidth={1.5} /></ANav>
          <ANav $w={20}><ChevronDown size={10} strokeWidth={1.5} /></ANav>
          <ANav $w={20} $c="#6b6b6b"><ArrowUp size={15} strokeWidth={2} /></ANav>
          <AddressBox>
            <ANav $w={17} $c="#000"><DownArrow s={17} /></ANav>
            {Crumbs.map(c => (
              <React.Fragment key={c}>
                <ChevronRight size={10} strokeWidth={2} color="#777" style={{ marginLeft: c === 'This PC' ? 3 : 0 }} />
                <Crumb>{c}</Crumb>
              </React.Fragment>
            ))}
            <Spring />
            <ChevronDown size={13} strokeWidth={1.5} color="#555" style={{ marginRight: 2 }} />
          </AddressBox>
          <Refresh><RotateCw size={11} strokeWidth={1.5} /></Refresh>
          <SearchBox>Search Downloads<Search size={12} strokeWidth={1.5} color="#666" /></SearchBox>
        </AddressRow>
        <Body>
          <Tree>
            {tree.map((r, i) => (
              <TreeRow key={i} $i={r.i} $on={r.on}>{r.ic}{r.t}</TreeRow>
            ))}
          </Tree>
          <VBar>
            <VArrow><ChevronUp size={12} strokeWidth={2.4} /></VArrow>
            <VThumb />
            <VArrow><ChevronDown size={12} strokeWidth={2.4} /></VArrow>
          </VBar>
          <ListPane>
            <ColHead>
              <ColCell $w={275} $pl={20}>Name</ColCell>
              <ColCell $w={144}>Date modified<SortCaret><ChevronDown size={9} strokeWidth={1.2} /></SortCaret></ColCell>
              <ColCell $w={120}>Type</ColCell>
              <ColCell $w={80}>Size</ColCell>
            </ColHead>
            <Items>
              {groups.map(g => (
                <React.Fragment key={g.name}>
                  <GroupHead>
                    <GroupChevron><ChevronDown size={14} strokeWidth={1.2} /></GroupChevron>
                    <GroupName>{g.name}</GroupName>
                    <GroupLine />
                  </GroupHead>
                  {g.items.map(it => (
                    <ItemRow key={it.n} $on={it.on}>
                      <ItemName><ItemIcon>{it.on ? <ExeIcon /> : <FileDoc />}</ItemIcon>{it.n}</ItemName>
                      <span>{it.d}</span>
                      <span>{it.k}</span>
                      <span>{it.s}</span>
                    </ItemRow>
                  ))}
                </React.Fragment>
              ))}
            </Items>
            <HBar>
              <HArrow $w={16}><ChevronLeft size={12} strokeWidth={2.4} /></HArrow>
              <HThumb />
              <HArrow $w={19}><ChevronRight size={12} strokeWidth={2.4} /></HArrow>
            </HBar>
          </ListPane>
        </Body>
        <Status>
          <StatusText $mr={21}>6 items</StatusText>
          <StatusText $mr={6}>1 item selected</StatusText>
          <StatusText>4.88 MB</StatusText>
          <ViewBtns>
            <ViewBtn $w={22} $on><DetailsIco /></ViewBtn>
            <ViewBtn $w={15}><ThumbIco /></ViewBtn>
          </ViewBtns>
        </Status>
      </Win>

      <Mark>
        <MarkWord $w={61} $sx={0.62}>ANY</MarkWord>
        <MarkLogo />
        <MarkWord $w={60} $sx={0.58}>RUN</MarkWord>
      </Mark>
    </Screen>
  );
}
